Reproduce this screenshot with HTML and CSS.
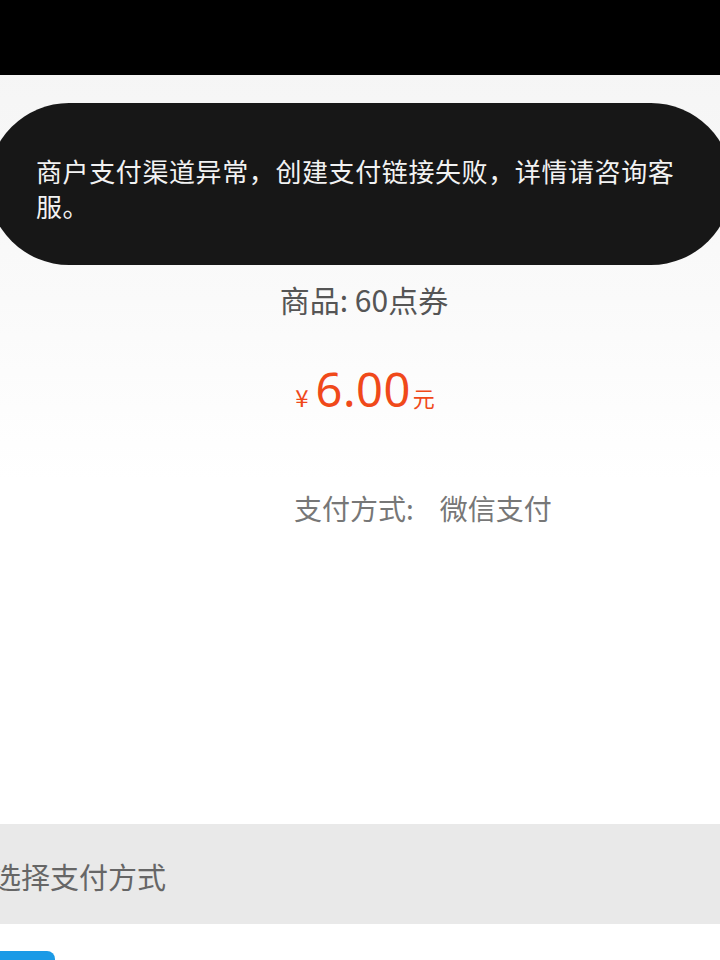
FILE: index.html
```html
<!DOCTYPE html>
<html>
<head>
	<meta charset="UTF-8">
	<title>支付</title>
	<link rel="stylesheet" href="styles.css">
</head>
<body>

	<div class="status-bar"></div>

	<div class="page">
		<p class="goods">商品: 60点券</p>
		<p class="price"><span class="yen">¥</span><span class="amount">6.00</span><span class="unit">元</span></p>
		<p class="pay-way"><span>支付方式:</span><span>微信支付</span></p>
	</div>

	<div class="choose">选择支付方式</div>
	<div class="bottom">
		<div class="tab"></div>
	</div>

	<!-- toast over the page -->
	<div class="toast">商户支付渠道异常，创建支付链接失败，详情请咨询客服。</div>

</body>
</html>
```

FILE: styles.css
```css
* { margin: 0; padding: 0; box-sizing: border-box; }

html, body {
	width: 100%;
	height: 100%;
	overflow: hidden;
}

body {
	background: linear-gradient(#f4f4f4 0, #fafafa 300px, #fff 480px);
	font-family: "Noto Sans CJK SC", "Noto Sans", sans-serif;
	color: #555;
}

.status-bar {
	height: 75px;
	background: #000;
}

.page {
	height: 749px;
	padding-top: 204px;
}

.goods {
	text-align: center;
	font-size: 30px;
	line-height: 40px;
	color: #555;
	padding-left: 8px;
}

.price {
	display: flex;
	justify-content: center;
	align-items: baseline;
	margin-top: 40px;
	padding-left: 10px;
	color: #f0491a;
	line-height: 60px;
}
.price .yen {
	font-size: 24px;
	margin-right: 7px;
}
.price .amount {
	font-family: "Noto Sans", sans-serif;
	font-size: 47px;
	letter-spacing: 0.5px;
}
.price .unit {
	font-size: 22px;
	margin-left: 2px;
}

.pay-way {
	display: flex;
	gap: 26px;
	margin-top: 61px;
	margin-left: 294px;
	font-size: 28px;
	line-height: 40px;
	color: #777;
}

.choose {
	height: 100px;
	background: #e9e9e9;
	padding-left: 0;
	margin-left: -8px;
	font-size: 29px;
	line-height: 104px;
	color: #666;
}

.bottom {
	padding-top: 27px;
	background: #fff;
}
.bottom .tab {
	width: 55px;
	height: 20px;
	background: #1b9ae6;
	border-radius: 0 8px 0 0;
}

.toast {
	position: absolute;
	top: 103px;
	left: -12px;
	width: 744px;
	height: 162px;
	padding: 50px 44px 0 48px;
	border-radius: 81px;
	background: #171717;
	color: #f2f2f2;
	font-size: 26px;
	line-height: 35px;
	letter-spacing: 0.6px;
}
```
